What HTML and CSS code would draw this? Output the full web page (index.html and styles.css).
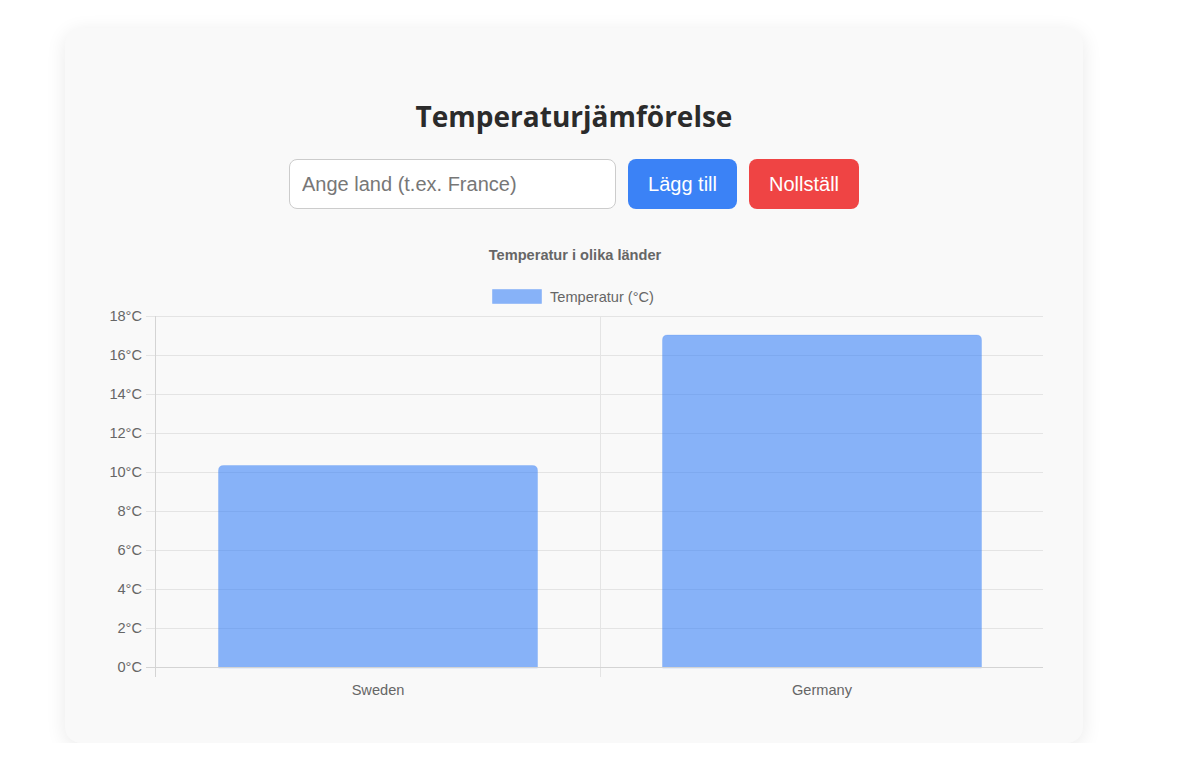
FILE: index.html
```html
<!DOCTYPE html>
<html lang="sv">
<head>
<meta charset="utf-8">
<title>Temperaturjämförelse</title>
<link rel="stylesheet" href="styles.css">
</head>
<body>
<div class="card">
  <h1 class="title">Temperaturjämförelse</h1>
  <div class="controls">
    <input class="country-input" type="text" placeholder="Ange land (t.ex. France)">
    <button class="btn btn-add">Lägg till</button>
    <button class="btn btn-reset">Nollställ</button>
  </div>
  <svg class="chart" width="1018" height="480" viewBox="65 230 1018 480" xmlns="http://www.w3.org/2000/svg">
    <text x="575" y="260" class="chart-title" text-anchor="middle">Temperatur i olika länder</text>
    <rect x="492.5" y="289.5" width="49" height="14" fill="rgba(59,130,246,0.6)" stroke="rgba(59,130,246,0.25)"/>
    <text x="550" y="302" class="chart-text">Temperatur (°C)</text>

    <g stroke="#e4e4e4" stroke-width="1">
      <line x1="146" y1="316.5" x2="1043" y2="316.5"/>
      <line x1="146" y1="355.5" x2="1043" y2="355.5"/>
      <line x1="146" y1="394.5" x2="1043" y2="394.5"/>
      <line x1="146" y1="433.5" x2="1043" y2="433.5"/>
      <line x1="146" y1="472.5" x2="1043" y2="472.5"/>
      <line x1="146" y1="511.5" x2="1043" y2="511.5"/>
      <line x1="146" y1="550.5" x2="1043" y2="550.5"/>
      <line x1="146" y1="589.5" x2="1043" y2="589.5"/>
      <line x1="146" y1="628.5" x2="1043" y2="628.5"/>
      <line x1="600.5" y1="316" x2="600.5" y2="677"/>
    </g>

    <path d="M218.5 668 V470.5 Q218.5 465.5 223.5 465.5 H532.5 Q537.5 465.5 537.5 470.5 V668 Z" fill="rgba(59,130,246,0.6)" stroke="rgba(59,130,246,0.2)"/>
    <path d="M662.5 668 V340 Q662.5 335 667.5 335 H976.5 Q981.5 335 981.5 340 V668 Z" fill="rgba(59,130,246,0.6)" stroke="rgba(59,130,246,0.2)"/>

    <g stroke="#d4d4d4" stroke-width="1">
      <line x1="146" y1="667.5" x2="1043" y2="667.5"/>
      <line x1="155.5" y1="316" x2="155.5" y2="677"/>
    </g>

    <g class="chart-text" text-anchor="end">
      <text x="142" y="321">18°C</text>
      <text x="142" y="360">16°C</text>
      <text x="142" y="399">14°C</text>
      <text x="142" y="438">12°C</text>
      <text x="142" y="477">10°C</text>
      <text x="142" y="516">8°C</text>
      <text x="142" y="555">6°C</text>
      <text x="142" y="594">4°C</text>
      <text x="142" y="633">2°C</text>
      <text x="142" y="672">0°C</text>
    </g>
    <g class="chart-text" text-anchor="middle">
      <text x="378" y="695">Sweden</text>
      <text x="822" y="695">Germany</text>
    </g>
  </svg>
</div>
</body>
</html>
```
FILE: styles.css
```css
html, body {
  margin: 0;
  padding: 0;
  background: #ffffff;
}

body {
  font-family: "Liberation Sans", Arial, sans-serif;
}

.card {
  box-sizing: border-box;
  width: 1018px;
  height: 715px;
  margin: 28px 0 0 65px;
  background: #f9f9f9;
  border-radius: 16px;
  box-shadow: 0 4px 20px rgba(0, 0, 0, 0.09);
  padding-top: 70px;
  display: flex;
  flex-direction: column;
  align-items: center;
}

.title {
  margin: 0;
  font-family: "Open Sans", "Noto Sans", sans-serif;
  font-size: 28px;
  line-height: 36px;
  font-weight: 700;
  color: #2b2b2b;
}

.controls {
  display: flex;
  gap: 12px;
  margin-top: 25px;
}

.country-input {
  box-sizing: border-box;
  width: 327px;
  height: 50px;
  padding: 0 12px;
  border: 1px solid #cccccc;
  border-radius: 8px;
  background: #ffffff;
  font-family: "Liberation Sans", Arial, sans-serif;
  font-size: 20px;
  color: #333;
  outline: none;
}

.country-input::placeholder {
  color: #777777;
}

.btn {
  box-sizing: border-box;
  height: 50px;
  padding: 0 20px;
  border: none;
  border-radius: 8px;
  color: #ffffff;
  font-family: "Liberation Sans", Arial, sans-serif;
  font-size: 20px;
  cursor: pointer;
}

.btn-add {
  width: 109px;
  background: #3b82f6;
}

.btn-reset {
  width: 110px;
  background: #ef4444;
}

.chart {
  display: block;
  margin-top: 21px;
  align-self: flex-start;
}

.chart-title {
  font-family: "Liberation Sans", Arial, sans-serif;
  font-size: 14.6px;
  font-weight: 700;
  fill: #666666;
}

.chart-text {
  font-family: "Liberation Sans", Arial, sans-serif;
  font-size: 14.6px;
  fill: #666666;
}
```
